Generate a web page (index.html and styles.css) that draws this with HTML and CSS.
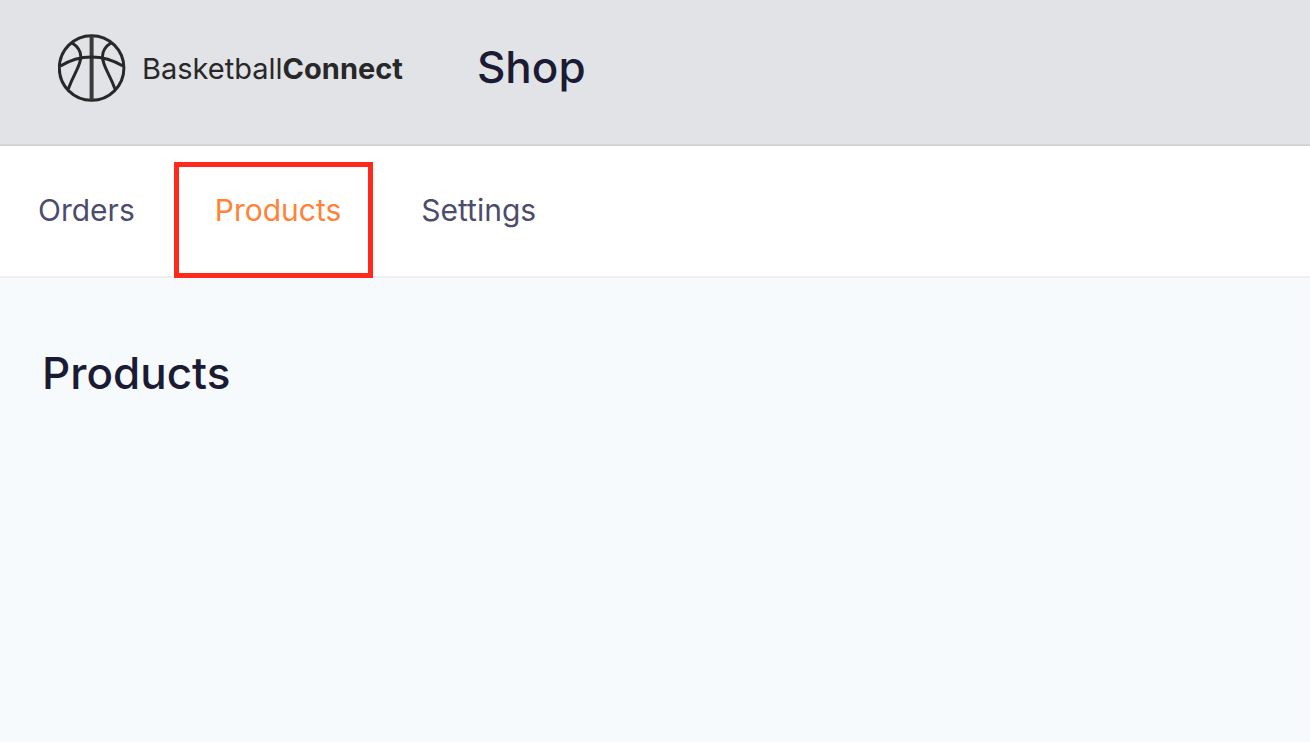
FILE: index.html
```html
<!DOCTYPE html>
<html lang="en">
  <head>
    <meta charset="UTF-8" />
    <meta name="viewport" content="width=device-width, initial-scale=1.0" />
    <title>Shop - Products</title>
    <link rel="stylesheet" href="styles.css">
  </head>
  <body>
    <header class="header">
      <a href="#" class="logo">
        <svg class="logo-icon" viewBox="0 0 68 68" aria-hidden="true">
          <circle cx="33.6" cy="34" r="32.3" />
          <path class="seam" d="M33.6 2v64" />
          <path d="M2.5 32C11 26.500 21 22.900 33.600 22.900S56 26.500 65 32" />
          <path d="M13.500 8.500C19 12 22.800 16 22.800 22.500C22.800 32 16.500 38 10.300 55" />
          <path d="M53.500 8.500C48 12 44.500 16 44.500 22.500C44.500 32 50.800 38 57 55" />
        </svg>
        <span class="logo-text">Basketball<strong>Connect</strong></span>
      </a>
      <span class="header-title">Shop</span>
    </header>

    <nav class="menu">
      <ul>
        <li><a href="#orders">Orders</a></li>
        <li class="active"><a href="#products">Products</a></li>
        <li><a href="#settings">Settings</a></li>
      </ul>
    </nav>

    <main class="content">
      <h1>Products</h1>
    </main>
  </body>
</html>
```

FILE: styles.css
```css
body {
  margin: 0;
  font-family: Inter, "Liberation Sans", sans-serif;
  font-variant-ligatures: none;
  background-color: #f6fafd;
  color: #1b1b34;
}

.header {
  display: flex;
  align-items: center;
  height: 136px;
  padding: 0 58px 8px;
  background-color: #e2e3e7;
  border-bottom: 2px solid #d4d5d8;
}

.logo {
  display: flex;
  align-items: center;
  gap: 16px;
  color: #282828;
  text-decoration: none;
}

.logo-icon {
  width: 68px;
  height: 68px;
  fill: none;
  stroke: #282828;
  stroke-width: 3;
}

.logo-icon .seam {
  stroke: #3a3a3a;
  stroke-width: 4;
}

.logo-text {
  font-size: 29px;
}

.logo-text strong {
  font-weight: 700;
}

.header-title {
  padding-bottom: 2px;
  margin-left: 74px;
  font-size: 44px;
  font-weight: 500;
}

.menu {
  background-color: #ffffff;
  border-bottom: 2px solid #eeeeee;
}

.menu ul {
  display: flex;
  height: 130px;
  margin: 0;
  padding: 0;
  list-style: none;
}

.menu li {
  padding: 45px 48px 0;
}

.menu li:first-child {
  padding: 45px 39px 0 38px;
}

.menu a {
  color: #4c4c6d;
  font-size: 30px;
  line-height: 38px;
  text-decoration: none;
}

/* selected section */
.menu .active {
  box-sizing: border-box;
  height: 116px;
  margin-top: 16px;
  padding: 24px 27px 0 36px;
  border: 5px solid #ff2a1c;
}

.menu .active a {
  color: #ff8237;
}

.content {
  padding: 67px 42px;
}

.content h1 {
  margin: 0;
  font-size: 44px;
  font-weight: 500;
  line-height: 56px;
}
```
